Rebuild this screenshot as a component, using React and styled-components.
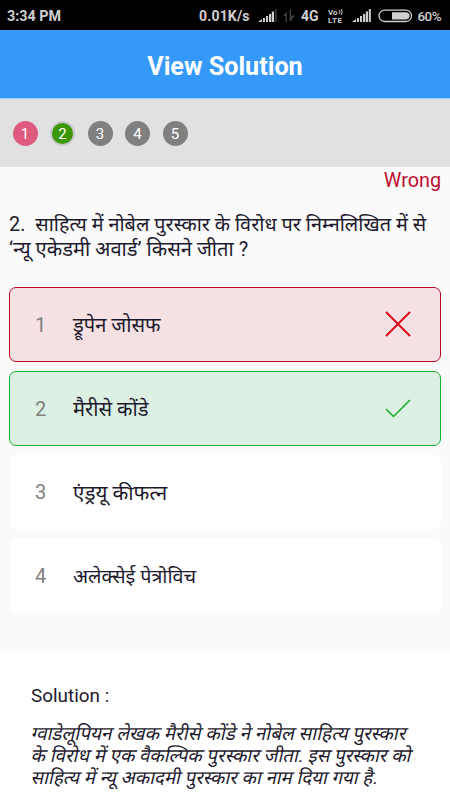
import React from "react";
import styled, { createGlobalStyle } from "styled-components";

const GlobalStyle = createGlobalStyle`
  * {
    box-sizing: border-box;
  }
  body {
    margin: 0;
    background: #fafafa;
    font-family: Roboto, "Noto Sans", "Noto Sans Devanagari", sans-serif;
    color: #1e1a2d;
  }
`;

const Container = styled.div`
  width: 450px;
  height: 800px;
  display: flex;
  flex-direction: column;
  overflow: hidden;
  background: #fafafa;
`;
const StatusBar = styled.div`
  height: 30px;
  flex: none;
  display: flex;
  align-items: center;
  justify-content: space-between;
  padding: 1px 8px 0 7px;
  background: #000;
  color: #cfcfcf;
  font-size: 14.3px;
  font-weight: 700;
  white-space: nowrap;
`;
const StatusIcons = styled.svg`
  width: 250px;
  height: 29px;
  display: block;
`;
const Header = styled.header`
  height: 69px;
  flex: none;
  display: flex;
  align-items: center;
  justify-content: center;
  padding-top: 4px;
  background: #3599fa;
  border-bottom: 1px solid #a5cdf5;
`;
const Title = styled.h1`
  margin: 0;
  color: #fff;
  font-size: 25.2px;
  font-weight: 700;
`;
const Pager = styled.nav`
  height: 68px;
  flex: none;
  display: flex;
  align-items: center;
  gap: 12.5px;
  padding-left: 12.5px;
  background: #e1e1e1;
`;
const Page = styled.span`
  width: 25px;
  height: 25px;
  display: flex;
  align-items: center;
  justify-content: center;
  border-radius: 50%;
  border: ${(props) => (props.$current ? "2.5px solid #c8c8c8" : "none")};
  background: ${(props) => props.$color};
  color: #fff;
  font-size: 15px;
  padding-top: 1px;
`;
const Result = styled.div`
  height: 45px;
  flex: none;
  padding: 1px 9px 0 0;
  color: #bd0c32;
  font-size: 19.8px;
  line-height: 26px;
  text-align: right;
`;
const Question = styled.div`
  height: 75px;
  flex: none;
  padding: 1px 0 0 9px;
  line-height: 24px;
  white-space: pre;
`;
const Line = styled.div`
  font-size: ${(props) => props.$size}px;
`;
const Options = styled.div`
  height: 364px;
  flex: none;
  display: flex;
  flex-direction: column;
  gap: 9px;
  padding: 0 9px;
`;
const Option = styled.div`
  height: 74.8px;
  flex: none;
  display: flex;
  align-items: center;
  padding: 0 29.5px 0 25px;
  border: 1px solid ${(props) => props.$border};
  border-radius: 7px;
  background: ${(props) => props.$fill};
`;
const Number = styled.span`
  width: 38px;
  padding-top: 1px;
  color: #808080;
  font-size: 20px;
`;
const Answer = styled.span`
  flex: 1;
  font-size: ${(props) => props.$size || 20.1}px;
  white-space: nowrap;
`;
const Mark = styled.svg`
  width: 26px;
  height: 26px;
  fill: none;
`;
const Solution = styled.section`
  flex: 1;
  padding: 31px 0 0 31px;
  background: #fff;
`;
const SolutionTitle = styled.div`
  height: 41px;
  font-size: 18.9px;
  line-height: 28px;
`;
// Devanagari has no italic face, so the slant comes from a skew
const SolutionLine = styled.div`
  padding-left: 1px;
  font-size: ${(props) => props.$size}px;
  line-height: 22px;
  white-space: nowrap;
  transform: skewX(-13deg);
`;

const pages = [
  { n: 1, color: "#df5a7f" },
  { n: 2, color: "#3c9705", current: true },
  { n: 3, color: "#808080" },
  { n: 4, color: "#808080" },
  { n: 5, color: "#808080" },
];

const options = [
  { text: "ड्रूपेन जोसफ", fill: "#f5e0e3", border: "#bf0620", mark: "wrong" },
  { text: "मैरीसे कोंडे", fill: "#dcf1e3", border: "#13b02c", mark: "right" },
  { text: "एंड्रयू कीफत्न", fill: "#fff", border: "#fff", size: 20.6 },
  { text: "अलेक्सेई पेत्रोविच", fill: "#fff", border: "#fff", size: 19.8 },
];

const Signal = ({ x, weak }) => (
  <g transform={`translate(${x} 0)`} fill="#cfcfcf">
    <path d="M0 21L4 18V21Z" />
    <rect x="5" y="17" width="2" height="4" />
    <rect x="8" y="15" width="2" height="6" />
    <rect x="11" y="13" width="2.2" height="8" />
    <rect x="13.8" y="10.5" width="2.2" height="10.5" />
    <rect x="16.8" y="8" width="2" height="13" fill={weak ? "#333" : "#cfcfcf"} />
  </g>
);

const StatusRight = () => (
  <StatusIcons viewBox="0 0 250 29" fontFamily="Roboto" fill="#cfcfcf">
    <text x="7" y="20" fontSize="14" textLength="50.5">0.01K/s</text>
    <Signal x={66} weak />
    <path d="M91 15L95 10.5V21H93.5V15ZM97.5 8.5H99V14.5H103L99 20H97.5Z" fill="#3a3a3a" />
    <text x="109" y="20" fontSize="14" textLength="17.5">4G</text>
    <text x="136" y="13.5" fontSize="7.8" textLength="9.5">Vo</text>
    <path d="M147 9Q149 11 147 13M149 8Q151.5 11 149 14" fill="none" stroke="#cfcfcf" />
    <text x="136" y="21.5" fontSize="8" textLength="14">LTE</text>
    <Signal x={160} />
    <rect x="187" y="9.2" width="32.5" height="11.3" rx="5.6" fill="none" stroke="#cfcfcf" strokeWidth="1.3" />
    <path d="M200 11.3H214A3.5 3.5 0 0 1 214 18.4H200Z" />
    <text x="225.5" y="19.5" fontSize="13.4" fontWeight="500" textLength="24">60%</text>
  </StatusIcons>
);

const App = () => (
  <>
    <GlobalStyle />
    <Container>
      <StatusBar>
        <span>3:34 PM</span>
        <StatusRight />
      </StatusBar>
      <Header>
        <Title>View Solution</Title>
      </Header>
      <Pager>
        {pages.map((page) => (
          <Page key={page.n} $color={page.color} $current={page.current}>
            {page.n}
          </Page>
        ))}
      </Pager>
      <Result>Wrong</Result>
      <Question>
        <Line $size={19.85}>{"2.  साहित्य में नोबेल पुरस्कार के विरोध पर निम्नलिखित में से"}</Line>
        <Line $size={20.1}>‘न्यू एकेडमी अवार्ड’ किसने जीता ?</Line>
      </Question>
      <Options>
        {options.map((option, index) => (
          <Option key={option.text} $fill={option.fill} $border={option.border}>
            <Number>{index + 1}</Number>
            <Answer $size={option.size}>{option.text}</Answer>
            {option.mark === "wrong" && (
              <Mark viewBox="0 0 26 26" stroke="#dc0011" strokeWidth="1.8">
                <path d="M1 1L25 25M25 1L1 25" />
              </Mark>
            )}
            {option.mark === "right" && (
              <Mark viewBox="0 0 26 26" stroke="#16a927" strokeWidth="1.5">
                <path d="M1 14L8.5 21.5L25 5" />
              </Mark>
            )}
          </Option>
        ))}
      </Options>
      <Solution>
        <SolutionTitle>Solution :</SolutionTitle>
        <SolutionLine $size={18.95}>ग्वाडेलूपियन लेखक मैरीसे कोंडे ने नोबेल साहित्य पुरस्कार</SolutionLine>
        <SolutionLine $size={18.75}>के विरोध में एक वैकल्पिक पुरस्कार जीता. इस पुरस्कार को</SolutionLine>
        <SolutionLine $size={18.7}>साहित्य में न्यू अकादमी पुरस्कार का नाम दिया गया है.</SolutionLine>
      </Solution>
    </Container>
  </>
);

export default App;
